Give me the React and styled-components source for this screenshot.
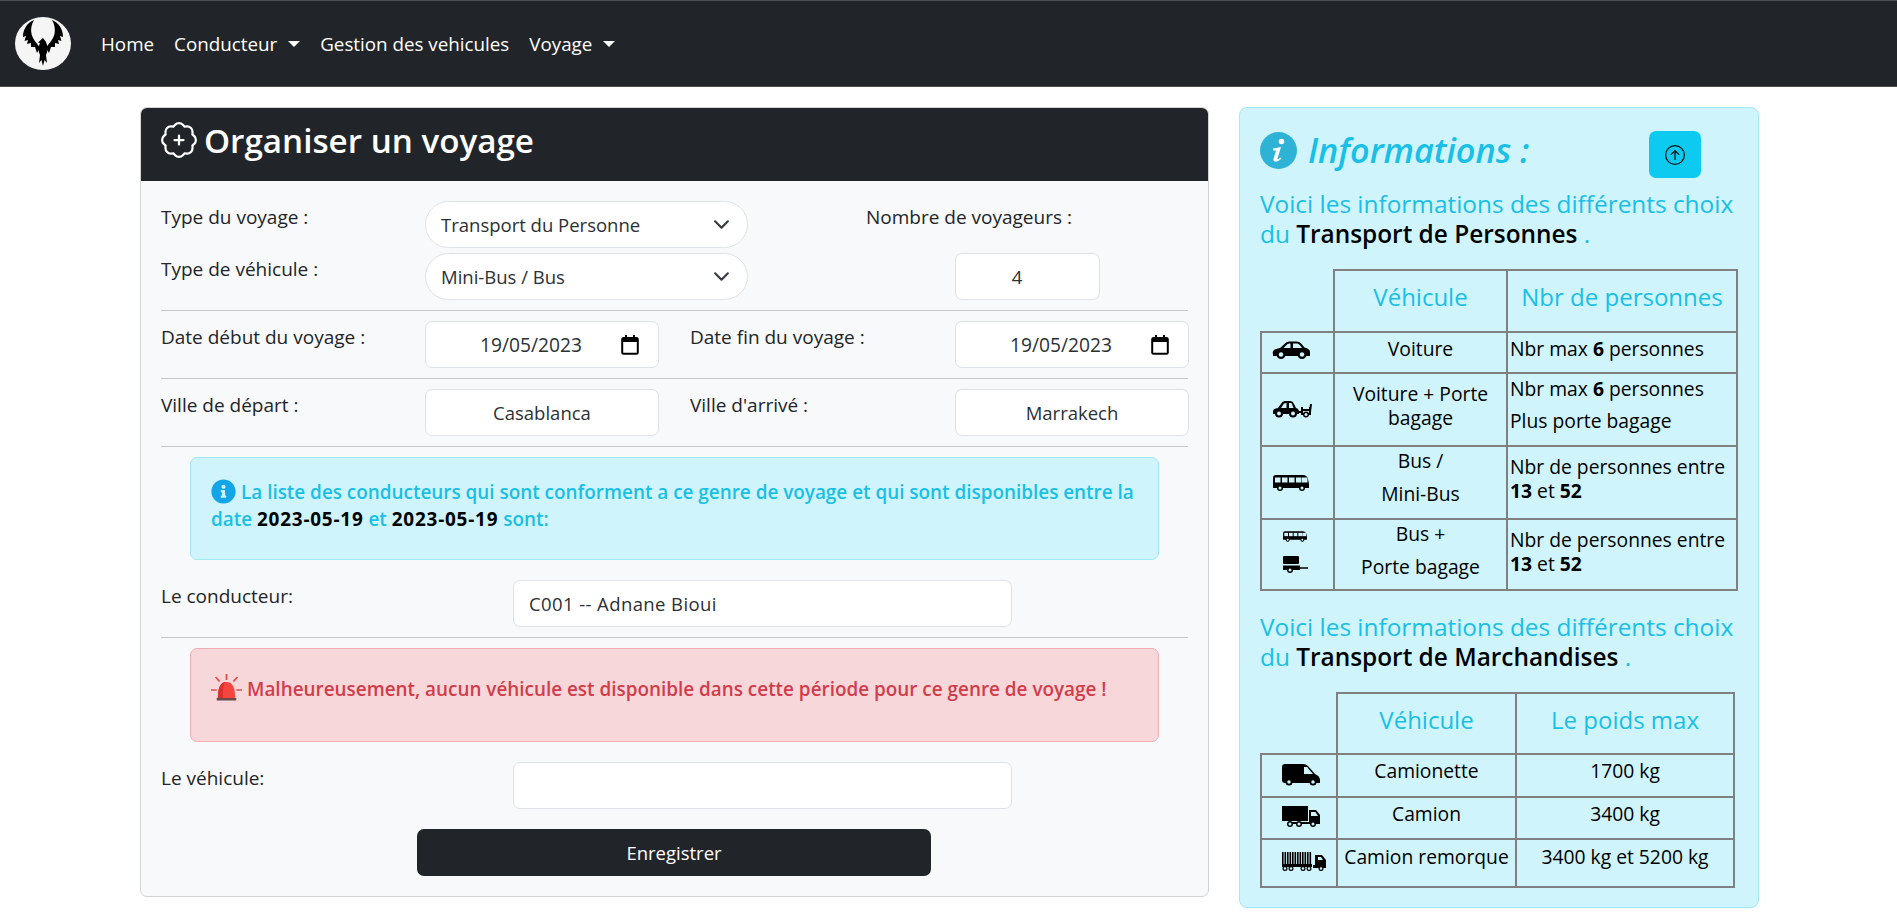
import React from 'react';
import styled, { createGlobalStyle } from 'styled-components';
import { BsPatchPlus, BsArrowUpCircle } from 'react-icons/bs';
import { FaInfoCircle } from 'react-icons/fa';

const PANEL = '#cff4fc';

const GlobalStyle = createGlobalStyle`
	* { box-sizing: border-box; }
	body {
		margin: 0;
		background: #fff;
		color: #212529;
		font-family: 'Open Sans', 'Noto Sans', sans-serif;
		font-size: 18.5px;
	}
`;

const Navbar = styled.nav`
	height: 87px;
	background: #212529;
	border-top: 1px solid #4a4d51;
	border-bottom: 1px solid #4a4d51;
	display: flex;
	align-items: center;
	padding-left: 15px;
	color: #fff;
`;

const NavList = styled.div`
	display: flex;
	align-items: center;
	gap: 20px;
	margin-left: 30px;
`;

const NavLink = styled.a`
	display: flex;
	align-items: center;
	font-size: 18.8px;
	white-space: nowrap;
	&::after {
		content: ${(p) => (p.$caret ? "''" : 'none')};
		margin-left: 11px;
		border-top: 6px solid #fff;
		border-left: 6px solid transparent;
		border-right: 6px solid transparent;
	}
`;

const Main = styled.main`
	display: flex;
	align-items: flex-start;
	gap: 30px;
	padding: 20px 0 9px 140px;
`;

const Card = styled.section`
	width: 1069px;
	background: #f8f9fa;
	border: 1px solid #d3d4d5;
	border-radius: 7px;
	overflow: hidden;
`;

const CardHeader = styled.header`
	height: 73px;
	background: #212529;
	color: #fff;
	display: flex;
	align-items: center;
	gap: 7px;
	padding: 0 0 9px 20px;
	font-size: 33.2px;
	font-weight: 600;
`;

const CardBody = styled.div`
	padding: 20px 20px 20px;
	display: flex;
	flex-direction: column;
`;

const FormRow = styled.div`
	display: grid;
	grid-template-columns: ${(p) => p.$columns};
	margin-bottom: ${(p) => p.$bottom ?? 0}px;
`;

const Label = styled.label`
	display: block;
	padding-top: 2px;
	line-height: 28px;
	font-size: 19px;
	padding-left: ${(p) => p.$indent ?? 0}px;
	grid-column: ${(p) => p.$span ?? 'auto'};
	white-space: nowrap;
`;

const Field = styled.div`
	grid-column: ${(p) => p.$col ?? 'auto'};
	height: 47px;
	background: #fff;
	border: 1px solid #dee2e6;
	border-radius: ${(p) => (p.$pill ? '24px' : '7px')};
	display: flex;
	align-items: center;
	justify-content: ${(p) => (p.$center ? 'center' : 'space-between')};
	padding: 0 ${(p) => p.$right ?? 15}px 0 15px;
	letter-spacing: ${(p) => p.$track ?? 0}px;
	white-space: nowrap;
	color: #2b3035;
`;

const DateText = styled.span`
	flex: 1;
	text-align: center;
	font-size: 19.2px;
`;

const Rule = styled.hr`
	width: 100%;
	margin: 10px 0;
	border: 0;
	border-top: 1px solid #c4c6c8;
`;

const Alert = styled.div`
	margin: 0 29px 20px;
	min-height: ${(p) => p.$height}px;
	padding: ${(p) => p.$top}px 20px 0;
	border-radius: 7px;
	border: 1px solid ${(p) => (p.$danger ? '#f1aeb5' : '#9eeaf9')};
	background: ${(p) => (p.$danger ? '#f8d7da' : PANEL)};
	color: ${(p) => (p.$danger ? '#d23c4a' : '#18bfe6')};
	font-weight: 600;
	font-size: 18.9px;
	line-height: 27px;
	svg { vertical-align: -5px; margin-right: 5px; }
	b { color: #000; font-weight: 700; letter-spacing: .8px; }
`;

const TextLine = styled.span`
	display: block;
`;

const SubmitRow = styled.div`
	display: flex;
	justify-content: center;
	margin-left: -1px;
`;

const Submit = styled.button`
	width: 514px;
	height: 47px;
	background: #212529;
	color: #fff;
	border: 0;
	border-radius: 7px;
	font: inherit;
`;

const InfoPanel = styled.aside`
	width: 520px;
	height: 801px;
	background: ${PANEL};
	border: 1px solid #9eeaf9;
	border-radius: 8px;
	padding: 23px 20px 0;
`;

const InfoHead = styled.div`
	display: flex;
	align-items: flex-start;
	height: 60px;
`;

const InfoTitle = styled.h2`
	margin: -2px 0 0;
	flex: 1;
	display: flex;
	align-items: center;
	gap: 11px;
	height: 40px;
	font-size: 34.2px;
	font-weight: 600;
	font-style: italic;
	color: #18bfe6;
	svg { margin-top: 2px; }
`;

const UpButton = styled.button`
	width: 52px;
	height: 47px;
	margin-right: 37px;
	background: #0dcaf0;
	border: 0;
	border-radius: 7px;
	display: flex;
	align-items: center;
	justify-content: center;
	color: #111;
`;

const InfoText = styled.h4`
	margin: ${(p) => p.$top ?? 0}px 0 ${(p) => p.$bottom}px;
	font-size: 24.4px;
	line-height: 30px;
	font-weight: 500;
	color: #18bfe6;
	b { color: #000; font-weight: 600; }
`;

const InfoTable = styled.table`
	border-collapse: collapse;
	table-layout: fixed;
	width: ${(p) => p.$width}px;
	color: #000;
	font-size: 19.3px;
	font-weight: 500;
	th, td { border: 2.5px solid #808080; padding: 0; text-align: center; }
	th {
		font-size: 24px;
		font-weight: 500;
		color: #18bfe6;
		vertical-align: top;
		padding-top: 9px;
	}
	th:first-child { border-top: 0; border-left: 0; }
	td { vertical-align: top; }
	td:first-child { vertical-align: middle; }
	b { font-weight: 700; }
`;

const HeadRow = styled.tr`
	height: ${(p) => p.$height}px;
`;

const BodyRow = styled.tr`
	height: ${(p) => p.$height}px;
`;

const TextCell = styled.td`
	&& {
		text-align: ${(p) => (p.$left ? 'left' : 'center')};
		padding-left: ${(p) => (p.$left ? 2 : 0)}px;
		padding-top: ${(p) => p.$top ?? 0}px;
	}
`;

const CellLine = styled.div`
	line-height: ${(p) => p.$height ?? 24}px;
	white-space: nowrap;
`;

const IconStack = styled.div`
	display: flex;
	flex-direction: column;
	align-items: flex-start;
	gap: 14px;
	margin-left: 21px;
	padding-bottom: 6px;
`;

const IconBox = styled.svg`
	display: block;
	margin-left: ${(p) => p.$inset ?? 0}px;
	margin-top: ${(p) => p.$lift ?? 0}px;
`;

const CalendarIcon = () => (
	<svg width="18" height="20" viewBox="0 0 18 20">
		<rect x="4" y="0" width="2" height="3" fill="#000" />
		<rect x="12" y="0" width="2" height="3" fill="#000" />
		<rect x="1.2" y="3" width="15.6" height="15.8" rx="1.5" fill="none" stroke="#000" strokeWidth="2" />
		<rect x="1" y="3" width="16" height="4" fill="#000" />
	</svg>
);

const Chevron = () => (
	<svg width="17" height="17" viewBox="0 0 16 16">
		<path d="M2 5l6 6 6-6" fill="none" stroke="#343a40" strokeWidth="2" strokeLinecap="round" strokeLinejoin="round" />
	</svg>
);

const Logo = () => (
	<svg width="56" height="53" viewBox="0 0 56 53">
		<ellipse cx="28" cy="26.500" rx="28" ry="26.500" fill="#f5f5f5" />
		<path d="M19 3 C12 6 8 12 8 20 L11 19 L9.500 24 L13 23 L12 27 L16 26 L16 30 L20 30 L22 36 L25 31 C22 26 18 23 16.500 17 C15.500 12 16.500 7 19 3Z" fill="#000" />
		<path d="M37 3 C44 6 48 12 48 20 L45 19 L46.500 24 L43 23 L44 27 L40 26 L40 30 L36 30 L34 36 L31 31 C34 26 38 23 39.500 17 C40.500 12 39.500 7 37 3Z" fill="#000" />
		<path d="M28 21 L31 25 C33 30 33 34 31 38 L32 46 L29.500 43 L28 49 L26.500 43 L24 46 L25 38 C23 34 23 30 25 26 L23 25.500 Z" fill="#000" />
	</svg>
);

const Alarm = () => (
	<svg width="31" height="27" viewBox="0 0 27 27" preserveAspectRatio="none">
		<path d="M13.500 0v6M4 3l3.500 4.500M23 3l-3.500 4.500M0 16h5M22 16h5" stroke="#e4524f" strokeWidth="1.600" />
		<path d="M6 24 C6 14 8 8 13.500 8 C19 8 21 14 21 24Z" fill="#f8443f" />
		<path d="M6 24 C6 14 8 8 13 8 C10 11 10.500 18 10.500 24Z" fill="#d8322f" />
		<rect x="5" y="24" width="17" height="2.500" fill="#6b4a4a" />
	</svg>
);

const Wheel = ({ x, y, r = 4.5 }) => (
	<>
		<circle cx={x} cy={y} r={r} fill="#000" />
		<circle cx={x} cy={y} r={r * 0.5} fill={PANEL} />
	</>
);

const CarIcon = () => (
	<IconBox $inset={10} $lift={-6} width="38" height="18" viewBox="0 0 38 18">
		<path d="M1 13 C0 10 2 8 8 7 L13 2.500 C14.500 1 16 .5 19 .5 L24 .5 C27 .5 28.500 1.500 30 3.500 L32.500 6.500 C36 7 38 9 38 11 L38 15 L1 15Z" fill="#000" />
		<path d="M11.500 7 L15 3.400 C16 2.600 17 2.400 18.500 2.400 L18.500 7Z M21 2.400 L24.500 2.400 C26 2.400 27 2.900 28 4.200 L30 7 L21 7Z" fill={PANEL} />
		<Wheel x={9} y={13.500} />
		<Wheel x={30} y={13.500} />
	</IconBox>
);

const CarTrailerIcon = () => (
	<IconBox $inset={11} width="39" height="17" viewBox="0 0 39 17">
		<path d="M0 11 C0 8 2 7.500 5 7 L9 1.500 C10 .5 11 0 13 0 L17 0 C19 0 20 1 21 3 L23 7 C25 7.500 26 9 26 11 L26 13 L0 13Z" fill="#000" />
		<path d="M8 7 L11 2.500 L13.500 2 L13.500 7Z M16 2 L18.500 2 L20.500 7 L16 7Z" fill={PANEL} />
		<Wheel x={6} y={12.500} r={4} />
		<Wheel x={20} y={12.500} r={4} />
		<path d="M26 11h3M29 6v7h8V6M38 3l-1 8M29 9h8" stroke="#000" strokeWidth="2" fill="none" />
		<Wheel x={33} y={13.500} r={3} />
	</IconBox>
);

const BusIcon = ({ width = 36, height = 16, inset = 11 }) => (
	<IconBox $inset={inset} width={width} height={height} viewBox="0 0 36 16">
		<path d="M0 3 Q0 0 3 0 L30 0 Q34 0 35 4 L36 9 L36 13 L0 13Z" fill="#000" />
		{[2, 9, 16, 23, 29].map((x) => (
			<rect key={x} x={x} y="2.500" width="5.500" height="5" fill={PANEL} />
		))}
		<Wheel x={7} y={13} r={3} />
		<Wheel x={29} y={13} r={3} />
	</IconBox>
);

const TrailerIcon = () => (
	<IconBox width="25" height="17" viewBox="0 0 25 17">
		<rect x="0" y="0" width="16" height="8" rx="1" fill="#000" />
		<rect x="0" y="9.500" width="17" height="4.500" fill="#000" />
		<path d="M16 12h9" stroke="#000" strokeWidth="1.500" />
		<Wheel x={7} y={14} r={3} />
	</IconBox>
);

const VanIcon = () => (
	<IconBox $inset={20} $lift={-2} width="38" height="22" viewBox="0 0 38 22">
		<path d="M0 3 Q0 0 3 0 L21 0 Q24 0 26 2 L33 10 Q38 12 38 16 L38 19 L3 19 Q0 19 0 16Z" fill="#000" />
		<path d="M22 3 L25 3 L31 10 L22 10Z" fill={PANEL} />
		<Wheel x={7} y={18} r={3.500} />
		<Wheel x={31} y={18} r={3.500} />
	</IconBox>
);

const TruckIcon = () => (
	<IconBox $inset={20} $lift={-2} width="38" height="22" viewBox="0 0 38 22">
		<rect x="0" y="0" width="26" height="15" fill="#000" />
		<path d="M27 4 L34 4 L38 9 L38 18 L6 18 L6 16 L27 16Z" fill="#000" />
		<path d="M29 6 L33.500 6 L36 10 L29 10Z" fill={PANEL} />
		<Wheel x={8} y={18} r={3} />
		<Wheel x={17} y={18} r={3} />
		<Wheel x={31} y={18} r={3} />
	</IconBox>
);

const LongTruckIcon = () => (
	<IconBox $inset={20} $lift={-2} width="44" height="20" viewBox="0 0 44 20">
		{[0, 2.500, 5, 7.500, 10, 12.500, 15, 17.500, 20, 22.500, 25, 27.500].map((x) => (
			<rect key={x} x={x} y="0" width="1.600" height="13" fill="#000" />
		))}
		<rect x="0" y="12" width="30" height="3" fill="#000" />
		<path d="M33 3 L40 3 L44 8 L44 16 L31 16 L31 13 L33 13Z" fill="#000" />
		<path d="M36 5 L39 5 L41 8 L36 8Z" fill={PANEL} />
		<Wheel x={3} y={16.500} r={2.500} />
		<Wheel x={9} y={16.500} r={2.500} />
		<Wheel x={21} y={16.500} r={2.500} />
		<Wheel x={27} y={16.500} r={2.500} />
		<Wheel x={39} y={16.500} r={2.500} />
	</IconBox>
);

const BigInfoIcon = () => (
	<svg width="37" height="37" viewBox="0 0 37 37">
		<circle cx="18.500" cy="18.500" r="18.500" fill="#2eb3d6" />
		<circle cx="21.500" cy="9.500" r="2.800" fill="#fff" />
		<path d="M13 16.500 L21 15 L17.500 26.500 C17.300 27.500 18 27.800 20.500 25.500 L21.500 26.500 C18.500 30 12.500 31 13.500 27 L16 18.500 L13 18.500Z" fill="#fff" />
	</svg>
);

const DateField = ({ value }) => (
	<Field $right={19}>
		<DateText>{value}</DateText>
		<CalendarIcon />
	</Field>
);

const COLS_TOP = '264px 323px 207px 145px';
const COLS_MID = '264px 234px 31px 265px 234px';
const COLS_PICK = '352px 499px';

export default function App() {
	return (
		<>
			<GlobalStyle />
			<Navbar>
				<Logo />
				<NavList>
					<NavLink>Home</NavLink>
					<NavLink $caret>Conducteur</NavLink>
					<NavLink>Gestion des vehicules</NavLink>
					<NavLink $caret>Voyage</NavLink>
				</NavList>
			</Navbar>
			<Main>
				<Card>
					<CardHeader>
						<BsPatchPlus size={36} />
						Organiser un voyage
					</CardHeader>
					<CardBody>
						<FormRow $columns={COLS_TOP} $bottom={5}>
							<Label>Type du voyage :</Label>
							<Field $pill $right={17}>
								Transport du Personne
								<Chevron />
							</Field>
							<Label $indent={118} $span="3 / 5">Nombre de voyageurs :</Label>
						</FormRow>
						<FormRow $columns={COLS_TOP}>
							<Label>Type de véhicule :</Label>
							<Field $pill $right={17}>
								Mini-Bus / Bus
								<Chevron />
							</Field>
							<Field $center $right={36} $col="4">4</Field>
						</FormRow>
						<Rule />
						<FormRow $columns={COLS_MID}>
							<Label>Date début du voyage :</Label>
							<DateField value="19/05/2023" />
							<Label $span="3 / 5" $indent={31}>Date fin du voyage :</Label>
							<DateField value="19/05/2023" />
						</FormRow>
						<Rule />
						<FormRow $columns={COLS_MID}>
							<Label>Ville de départ :</Label>
							<Field $center>Casablanca</Field>
							<Label $span="3 / 5" $indent={31}>Ville d'arrivé :</Label>
							<Field $center>Marrakech</Field>
						</FormRow>
						<Rule />
						<Alert $height={103} $top={21}>
							<TextLine>
								<FaInfoCircle size={25} color="#12a5e8" />
								La liste des conducteurs qui sont conforment a ce genre de voyage et qui sont disponibles entre la
							</TextLine>
							<TextLine>
								date <b>2023-05-19</b> et <b>2023-05-19</b> sont:
							</TextLine>
						</Alert>
						<FormRow $columns={COLS_PICK}>
							<Label>Le conducteur:</Label>
							<Field $track={0.4}>C001 -- Adnane Bioui</Field>
						</FormRow>
						<Rule />
						<Alert $danger $height={94} $top={25}>
							<Alarm />
							Malheureusement, aucun véhicule est disponible dans cette période pour ce genre de voyage !
						</Alert>
						<FormRow $columns={COLS_PICK} $bottom={20}>
							<Label>Le véhicule:</Label>
							<Field />
						</FormRow>
						<SubmitRow>
							<Submit>Enregistrer</Submit>
						</SubmitRow>
					</CardBody>
				</Card>
				<InfoPanel>
					<InfoHead>
						<InfoTitle>
							<BigInfoIcon />
							Informations :
						</InfoTitle>
						<UpButton aria-label="Remonter">
							<BsArrowUpCircle size={20} />
						</UpButton>
					</InfoHead>
					<InfoText $top={-2} $bottom={20}>
						<TextLine>Voici les informations des différents choix</TextLine>
						<TextLine>du <b>Transport de Personnes</b> .</TextLine>
					</InfoText>
					<InfoTable $width={476}>
						<colgroup>
							<col width="73" />
							<col width="173" />
							<col width="230" />
						</colgroup>
						<thead>
							<HeadRow $height={62}>
								<th />
								<th>Véhicule</th>
								<th>Nbr de personnes</th>
							</HeadRow>
						</thead>
						<tbody>
							<BodyRow $height={41}>
								<td><CarIcon /></td>
								<TextCell><CellLine $height={31}>Voiture</CellLine></TextCell>
								<TextCell $left><CellLine $height={31}>Nbr max <b>6</b> personnes</CellLine></TextCell>
							</BodyRow>
							<BodyRow $height={73}>
								<td><CarTrailerIcon /></td>
								<TextCell $top={8}>
									<CellLine>Voiture + Porte</CellLine>
									<CellLine>bagage</CellLine>
								</TextCell>
								<TextCell $left>
									<CellLine $height={30}>Nbr max <b>6</b> personnes</CellLine>
									<CellLine $height={34}>Plus porte bagage</CellLine>
								</TextCell>
							</BodyRow>
							<BodyRow $height={73}>
								<td><BusIcon /></td>
								<TextCell>
									<CellLine $height={28}>Bus /</CellLine>
									<CellLine $height={37}>Mini-Bus</CellLine>
								</TextCell>
								<TextCell $left $top={8}>
									<CellLine>Nbr de personnes entre</CellLine>
									<CellLine><b>13</b> et <b>52</b></CellLine>
								</TextCell>
							</BodyRow>
							<BodyRow $height={71}>
								<td>
									<IconStack>
										<BusIcon width={24} height={11} inset={0} />
										<TrailerIcon />
									</IconStack>
								</td>
								<TextCell>
									<CellLine $height={28}>Bus +</CellLine>
									<CellLine $height={37}>Porte bagage</CellLine>
								</TextCell>
								<TextCell $left $top={8}>
									<CellLine>Nbr de personnes entre</CellLine>
									<CellLine><b>13</b> et <b>52</b></CellLine>
								</TextCell>
							</BodyRow>
						</tbody>
					</InfoTable>
					<InfoText $top={21} $bottom={20}>
						<TextLine>Voici les informations des différents choix</TextLine>
						<TextLine>du <b>Transport de Marchandises</b> .</TextLine>
					</InfoText>
					<InfoTable $width={473}>
						<colgroup>
							<col width="76" />
							<col width="179" />
							<col width="218" />
						</colgroup>
						<thead>
							<HeadRow $height={61}>
								<th />
								<th>Véhicule</th>
								<th>Le poids max</th>
							</HeadRow>
						</thead>
						<tbody>
							<BodyRow $height={43}>
								<td><VanIcon /></td>
								<TextCell><CellLine $height={32}>Camionette</CellLine></TextCell>
								<TextCell><CellLine $height={32}>1700 kg</CellLine></TextCell>
							</BodyRow>
							<BodyRow $height={42}>
								<td><TruckIcon /></td>
								<TextCell><CellLine $height={32}>Camion</CellLine></TextCell>
								<TextCell><CellLine $height={32}>3400 kg</CellLine></TextCell>
							</BodyRow>
							<BodyRow $height={48}>
								<td><LongTruckIcon /></td>
								<TextCell><CellLine $height={34}>Camion remorque</CellLine></TextCell>
								<TextCell><CellLine $height={34}>3400 kg et 5200 kg</CellLine></TextCell>
							</BodyRow>
						</tbody>
					</InfoTable>
				</InfoPanel>
			</Main>
		</>
	);
}
